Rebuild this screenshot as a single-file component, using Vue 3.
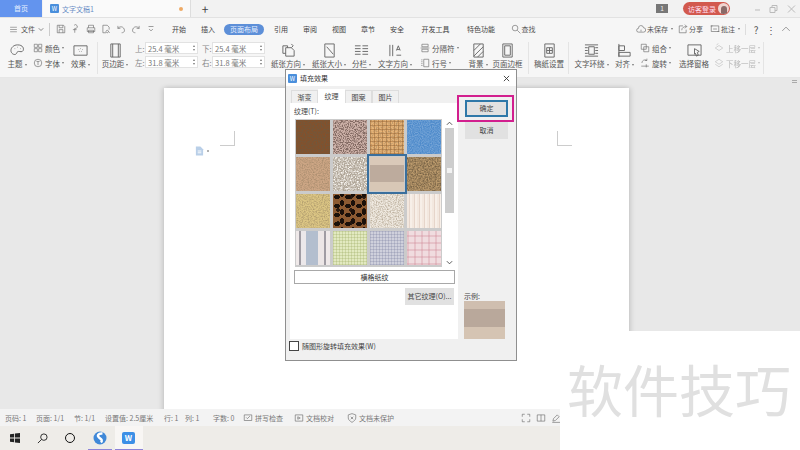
<template>
  <div class="screen">
    <div class="tabbar">
      <div class="home-tab">首页</div>
      <div class="doc-tab">
        <span class="w-logo">W</span>
        <span class="doc-name">文字文稿1</span>
        <span class="dot"></span>
      </div>
      <span class="plus">+</span>
      <span class="badge">1</span>
      <div class="login"><span>访客登录</span><span class="login-face"><i></i></span></div>
      <svg class="win-btns" viewBox="0 0 46 10">
        <path d="M3 6h5" />
        <path d="M18 3.500h5v5h-5zM20 3.500V1.500h5v5h-2" />
        <path d="M36 1.500l7 7M43 1.500l-7 7" />
      </svg>
    </div>

    <div class="menubar">
      <div class="file-menu">
        <svg class="ic12" viewBox="0 0 16 16"><path d="M2 4h12M2 8h12M2 12h12" /></svg>
        <span>文件</span>
        <svg class="ic-chev" viewBox="0 0 8 8"><path d="M1 3l3 3 3-3" /></svg>
      </div>
      <div class="quick">
        <svg v-for="(q, i) in quickIcons" :key="i" class="ic10" viewBox="0 0 16 16"><path :d="q" /></svg>
      </div>
      <div class="menu-tabs">
        <span v-for="m in menus" :key="m" class="menu-tab" :class="{ on: m === '页面布局' }">{{ m }}</span>
        <span class="find">
          <svg class="ic10" viewBox="0 0 16 16"><path d="M10 10l5 5M11 6.500a4.500 4.500 0 1 1-9 0a4.500 4.500 0 1 1 9 0" /></svg>查找
        </span>
      </div>
      <div class="menu-right">
        <span class="mr-item"><svg class="ic10" viewBox="0 0 16 16"><path d="M4 13a3 3 0 0 1 0-6a4 4 0 0 1 8-1a3.500 3.500 0 0 1 0 7zM8 9v3" /></svg>未保存<i class="caret"></i></span>
        <span class="mr-item"><svg class="ic10" viewBox="0 0 16 16"><path d="M8 3H2v11h11V9M6 10c0-4 3-6 8-6M11 1l3 3-3 3" /></svg>分享</span>
        <span class="mr-item mr-note"><svg class="ic10" viewBox="0 0 16 16"><path d="M2 3h12v9H2zM1 3h3M12 12h3M5 8h6" /></svg>批注<i class="caret"></i></span>
        <span class="mr-sep"></span>
        <span class="mr-help">?</span>
        <span class="mr-help">⋮</span>
        <svg class="ic10" viewBox="0 0 16 16"><path d="M2 11l6-6 6 6" /></svg>
      </div>
    </div>

    <div class="ribbon">
      <template v-for="(it, i) in ribbon" :key="i">
        <div v-if="it.type === 'sep'" class="rb-sep" :style="{ width: it.w + 'px' }"><i v-if="it.line"></i></div>
        <div v-else-if="it.type === 'big'" class="rb-big" :style="{ width: it.w + 'px' }">
          <svg class="ic-big" viewBox="0 0 16 16"><path :d="it.icon" /></svg>
          <span class="rb-label">{{ it.label }}<i v-if="it.caret" class="caret"></i></span>
        </div>
        <div v-else-if="it.type === 'stack'" class="rb-stack" :class="{ faded: it.faded }" :style="{ width: it.w + 'px' }">
          <div v-for="r in it.rows" :key="r.label" class="rb-row">
            <svg class="ic11" viewBox="0 0 16 16"><path :d="r.icon" /></svg>
            <span>{{ r.label }}</span><i class="caret"></i>
          </div>
        </div>
        <div v-else class="rb-fields" :style="{ width: it.w + 'px' }">
          <div v-for="f in fields" :key="f.label" class="field">
            <span class="field-label">{{ f.label }}</span>
            <span class="field-box">{{ f.value }}<span class="spin"><i class="up"></i><i class="down"></i></span></span>
          </div>
        </div>
      </template>
    </div>

    <div class="doc-area">
      <div class="ruler-toggle"></div>
      <div class="page">
        <div class="marks">
          <span class="mark-l"></span>
          <span class="mark-r"></span>
        </div>
        <div class="note">
          <svg class="note-icon" viewBox="0 0 10 10"><path d="M1 0h5l3 3v7H1z" /><path class="note-line" d="M3 5h4M3 7h4" /></svg>
          <i class="note-dot"></i>
        </div>
      </div>
    </div>

    <div class="statusbar">
      <span v-for="s in statusItems" :key="s.text" class="st-item" :style="{ width: s.w + 'px' }">
        <svg v-if="s.icon" class="ic10" viewBox="0 0 16 16"><path :d="s.icon" /></svg>{{ s.text }}
      </span>
      <div class="st-right">
        <svg class="ic10" viewBox="0 0 16 16"><path d="M2 6V2h4M14 6V2h-4M2 10v4h4M14 10v4h-4" /></svg>
        <svg class="ic10" viewBox="0 0 16 16"><path d="M2 3h12v10H2zM8 3v10" /></svg>
        <svg class="ic10" viewBox="0 0 16 16"><path d="M3 13l1-4 6-6 3 3-6 6zM2 15h13" /></svg>
      </div>
    </div>

    <div class="taskbar">
      <span class="tb-cell">
        <svg class="win" viewBox="0 0 12 12"><path d="M0 1.500l5-.7v4.700H0zM6 .7l6-.7v5.500H6zM0 6.500h5v4.700l-5-.7zM6 6.500h6V12l-6-.7z" /></svg>
      </span>
      <span class="tb-cell">
        <svg class="tb-search" viewBox="0 0 12 12"><path d="M5 7l-4 4M11 4.500a3.500 3.500 0 1 1-7 0a3.500 3.500 0 1 1 7 0" /></svg>
      </span>
      <span class="tb-cell"><i class="tb-circle"></i></span>
      <span class="tb-cell tb-app tb-sogou">
        <svg class="sogou" viewBox="0 0 14 14">
          <circle cx="7" cy="7" r="6.500" />
          <path d="M9.500 2.500C5 2 4 5 6 6.500S10 9 8 11.500" />
        </svg>
      </span>
      <span class="tb-cell tb-app tb-active"><span class="wps-tile">W</span></span>
    </div>

    <div class="dialog">
      <div class="dlg-title">
        <span class="w-logo">W</span>
        <span class="dlg-name">填充效果</span>
        <svg class="dlg-close" viewBox="0 0 8 8"><path d="M1 1l6 6M7 1L1 7" /></svg>
      </div>
      <div class="dlg-main">
        <div class="dlg-left">
          <div class="dlg-tabs">
            <span v-for="t in dlgTabs" :key="t" class="dlg-tab" :class="{ on: t === '纹理' }">{{ t }}</span>
          </div>
          <div class="panel">
            <div class="panel-label">纹理(T):</div>
            <div class="tex-list">
              <div class="tex-grid">
                <div v-for="(t, i) in textures" :key="i" class="tex" :class="[t.cls, { picked: i === 6 }]">
                  <svg v-if="t.noise" class="tex-noise" viewBox="0 0 34 34"><rect width="34" height="34" :filter="'url(#' + t.noise + ')'" /></svg>
                </div>
              </div>
              <div class="tex-scroll">
                <svg class="sc-arrow" viewBox="0 0 8 6"><path d="M1 4.500l3-3 3 3" /></svg>
                <div class="sc-thumb"><i></i></div>
                <svg class="sc-arrow sc-down" viewBox="0 0 8 6"><path d="M1 1.500l3 3 3-3" /></svg>
              </div>
            </div>
            <div class="tex-name">横格纸纹</div>
            <div class="other-btn">其它纹理(O)...</div>
          </div>
        </div>
        <div class="dlg-right">
          <div class="ok-wrap">
            <div class="btn ok">确定</div>
            <span class="pink-box"></span>
          </div>
          <div class="btn cancel">取消</div>
          <div class="sample-label">示例:</div>
          <div class="sample"></div>
        </div>
      </div>
      <div class="dlg-check"><i class="check-box"></i>随图形旋转填充效果(W)</div>
    </div>

    <div class="cover"><span>软件技巧</span></div>

    <svg class="defs" width="0" height="0">
      <filter id="nDark" x="0" y="0" width="100%" height="100%">
        <feTurbulence type="fractalNoise" baseFrequency="0.75" numOctaves="2" seed="3" />
        <feColorMatrix values="0 0 0 0 0.15  0 0 0 0 0.1  0 0 0 0 0.05  1.8 0 0 0 -0.55" />
      </filter>
      <filter id="nHard" x="0" y="0" width="100%" height="100%">
        <feTurbulence type="fractalNoise" baseFrequency="0.85" numOctaves="2" seed="21" />
        <feColorMatrix values="0 0 0 0 0.22  0 0 0 0 0.14  0 0 0 0 0.12  4.5 0 0 0 -1.9" />
      </filter>
      <filter id="nSoft" x="0" y="0" width="100%" height="100%">
        <feTurbulence type="fractalNoise" baseFrequency="0.8" numOctaves="2" seed="8" />
        <feColorMatrix values="0 0 0 0 0.25  0 0 0 0 0.18  0 0 0 0 0.1  1.2 0 0 0 -0.45" />
      </filter>
      <filter id="nLight" x="0" y="0" width="100%" height="100%">
        <feTurbulence type="fractalNoise" baseFrequency="0.7" numOctaves="2" seed="12" />
        <feColorMatrix values="0 0 0 0 1  0 0 0 0 0.98  0 0 0 0 0.95  2.4 0 0 0 -0.9" />
      </filter>
      <filter id="nBlue" x="0" y="0" width="100%" height="100%">
        <feTurbulence type="fractalNoise" baseFrequency="0.9" numOctaves="1" seed="5" />
        <feColorMatrix values="0 0 0 0 0.9  0 0 0 0 0.95  0 0 0 0 1  0.6 0 0 0 -0.2" />
      </filter>
    </svg>
  </div>
</template>

<script setup>
const quickIcons = [
  'M2 2h10l2 2v10H2zM5 2v4h6V2M5 14v-5h6v5',
  'M5 2a3 3 0 1 1 3 5H6v7M3 9h6',
  'M4 6V2h8v4M2 6h12v6H2zM4 10h8v4H4z',
  'M3 2h7l3 3v4M3 2v12h5M10 10a2 2 0 1 0 .1 0M12 12l2 2',
  'M3 3v4h4M3 7c2-3 8-4 10 1s-2 6-4 6',
  'M13 3v4H9M13 7c-2-3-8-4-10 1s2 6 4 6',
  'M4 4h8M5 8l3 3 3-3'
]

const menus = ['开始', '插入', '页面布局', '引用', '审阅', '视图', '章节', '安全', '开发工具', '特色功能']

const fields = [
  { label: '上:', value: '25.4 毫米' },
  { label: '下:', value: '25.4 毫米' },
  { label: '左:', value: '31.8 毫米' },
  { label: '右:', value: '31.8 毫米' }
]

const ribbon = [
  { type: 'sep', w: 4 },
  { type: 'big', w: 26, label: '主题', caret: true, icon: 'M8 2C4 2 1 5 1 8s3 5 5 4 1-3 3-3 4 1 5-1 0-6-6-6zM5 6h.5M8 4.500h.5M11 6h.5' },
  { type: 'stack', w: 39, rows: [
    { label: '颜色', icon: 'M2 2h5v5H2zM9 2h5v5H9zM2 9h5v5H2zM9 9h5v5H9z' },
    { label: '字体', icon: 'M14 8A6 6 0 1 1 2 8a6 6 0 1 1 12 0M5.500 5.500h5M8 5.500v6' }
  ] },
  { type: 'big', w: 23, label: '效果', caret: true, icon: 'M1 3h14v10H1zM6 7h.5M8 6h.5M10 7h.5M7 9h.5M9 9h.5' },
  { type: 'sep', w: 10, line: true },
  { type: 'big', w: 26, label: '页边距', caret: true, icon: 'M3 1h10v14H3zM5 1v14M11 1v14' },
  { type: 'fields', w: 140 },
  { type: 'big', w: 40, label: '纸张方向', caret: true, icon: 'M5 5h6l3 3v6H5zM2 3h5v2M2 3v8h3M11 1l2 2-2 2' },
  { type: 'big', w: 42, label: '纸张大小', caret: true, icon: 'M3 1h10v14H3zM5 4l7 8' },
  { type: 'big', w: 23, label: '分栏', caret: true, icon: 'M1 3h6M1 6h6M1 9h6M1 12h6M9 3h6M9 6h6M9 9h6M9 12h6' },
  { type: 'big', w: 44, label: '文字方向', caret: true, icon: 'M2 2v12M5 2v12M9 8l2-5 2 5M9.500 7h3M9 13h5' },
  { type: 'stack', w: 43, rows: [
    { label: '分隔符', icon: 'M3 2h10v4H3zM1 8h14M3 10h10v4H3z' },
    { label: '行号', icon: 'M6 2h8v12H6zM2 3h2M2 6h2M2 9h2M2 12h2' }
  ] },
  { type: 'sep', w: 6 },
  { type: 'big', w: 24, label: '背景', caret: true, icon: 'M3 1h10v14H3zM3 8l7-7M3 14L13 4M7 15l6-6' },
  { type: 'big', w: 35, label: '页面边框', icon: 'M3 1h10v14H3zM5 3h6v10H5z' },
  { type: 'sep', w: 7, line: true },
  { type: 'big', w: 34, label: '稿纸设置', icon: 'M3 1h10v14H3zM5 5h6v6H5zM5 8h6M8 5v6' },
  { type: 'sep', w: 5, line: true },
  { type: 'big', w: 41, label: '文字环绕', caret: true, icon: 'M1 2h14M1 14h14M1 5h3M1 8h3M1 11h3M12 5h3M12 8h3M12 11h3M5 4h6v8H5z' },
  { type: 'big', w: 25, label: '对齐', caret: true, icon: 'M2 1v14M2 3h6v5H2zM2 10h12v4H2z' },
  { type: 'stack', w: 40, rows: [
    { label: '组合', icon: 'M2 2h8v8H2zM6 6h8v8H6z' },
    { label: '旋转', icon: 'M3 8a5 5 0 0 1 8-4M11 1v3H8M2 13h12M10 10v5' }
  ] },
  { type: 'big', w: 34, label: '选择窗格', icon: 'M1 2h14v11H1zM8 6l5 3-2 1 1 3-2 1-1-3-1 1z' },
  { type: 'stack', w: 50, faded: true, rows: [
    { label: '上移一层', icon: 'M2 8l6-4 6 4-6 4zM4 3l3-2' },
    { label: '下移一层', icon: 'M2 6l6-4 6 4-6 4zM2 10l6 4 6-4' }
  ] },
  { type: 'sep', w: 5, line: true }
]

const statusItems = [
  { text: '页码: 1', w: 31 },
  { text: '页面: 1/1', w: 38 },
  { text: '节: 1/1', w: 31 },
  { text: '设置值: 2.5厘米', w: 59 },
  { text: '行: 1', w: 21 },
  { text: '列: 1', w: 28 },
  { text: '字数: 0', w: 30 },
  { text: '拼写检查', w: 51, icon: 'M2 3h12v9H2zM5 7l2 2 4-4' },
  { text: '文档校对', w: 53, icon: 'M2 3h12v10H2zM6 6l4 2-4 2z' },
  { text: '文档未保护', w: 50, icon: 'M8 1l6 2v5c0 3-3 5-6 7-3-2-6-4-6-7V3zM6 6l4 4M10 6l-4 4' }
]

const dlgTabs = ['渐变', '纹理', '图案', '图片']

const textures = [
  { cls: 't-brown', noise: 'nDark' },
  { cls: 't-granite', noise: 'nHard' },
  { cls: 't-burlap', noise: 'nSoft' },
  { cls: 't-blue', noise: 'nBlue' },
  { cls: 't-sand', noise: 'nSoft' },
  { cls: 't-stone', noise: 'nLight' },
  { cls: 't-bands' },
  { cls: 't-cork', noise: 'nDark' },
  { cls: 't-yellow', noise: 'nSoft' },
  { cls: 't-leopard' },
  { cls: 't-paper', noise: 'nSoft' },
  { cls: 't-wood' },
  { cls: 't-stripes' },
  { cls: 't-green' },
  { cls: 't-lilac' },
  { cls: 't-pink' }
]
</script>

<style>
html, body {
  margin: 0;
  background: #fff;
}
</style>

<style scoped>
.screen {
  position: relative;
  display: flex;
  flex-direction: column;
  width: 800px;
  height: 450px;
  overflow: hidden;
  font-family: "Noto Sans CJK SC", "Noto Sans", sans-serif;
  font-size: 7.5px;
  color: #555;
  background: #f3f3f3;
}
svg path {
  fill: none;
  stroke: #666;
  stroke-width: 1;
}
i {
  font-style: normal;
}
.ic10 { width: 10px; height: 10px; flex-shrink: 0; }
.ic11 { width: 10px; height: 10px; flex-shrink: 0; margin-right: 2px; }
.ic12 { width: 9px; height: 9px; }
.ic-big { width: 15px; height: 15px; flex-shrink: 0; }
.ic-chev { width: 6px; height: 6px; }
.caret {
  display: inline-block;
  width: 0;
  height: 0;
  margin-left: 2px;
  vertical-align: middle;
  border-top: 2px solid #777;
  border-left: 1.5px solid transparent;
  border-right: 1.5px solid transparent;
}

/* top tabs */
.tabbar {
  display: flex;
  align-items: stretch;
  height: 18px;
  font-size: 7px;
  background: #f2f2f2;
  border-bottom: 1px solid #e2e2e2;
  box-sizing: border-box;
}
.home-tab {
  width: 42px;
  line-height: 17px;
  text-align: center;
  color: #e8f0ff;
  background: #6394ee;
}
.doc-tab {
  display: flex;
  align-items: center;
  width: 148px;
  margin-left: 1px;
  padding-left: 7px;
  box-sizing: border-box;
  color: #6b8fc6;
  background: #fafafa;
  border-right: 1px solid #ddd;
}
.w-logo {
  width: 9px;
  height: 9px;
  line-height: 9px;
  font-size: 6px;
  text-align: center;
  color: #fff;
  background: #4a8fdc;
  border-radius: 1px;
}
.doc-name {
  margin-left: 3px;
}
.dot {
  width: 4px;
  height: 4px;
  margin-left: auto;
  margin-right: 7px;
  border-radius: 50%;
  background: #eeaa66;
}
.plus {
  width: 28px;
  line-height: 17px;
  text-align: center;
  font-size: 12px;
  color: #444;
}
.badge {
  align-self: center;
  width: 12px;
  height: 9px;
  margin-left: 437px;
  line-height: 9px;
  text-align: center;
  font-size: 6.5px;
  color: #eee;
  background: #777;
}
.login {
  display: flex;
  align-items: center;
  justify-content: space-between;
  align-self: center;
  width: 47px;
  height: 13px;
  margin-left: 15px;
  padding: 0 1px 0 5px;
  box-sizing: border-box;
  border-radius: 7px;
  color: #fde;
  background: #d2594e;
}
.login-face {
  display: flex;
  align-items: flex-end;
  justify-content: center;
  width: 11px;
  height: 11px;
  overflow: hidden;
  border-radius: 50%;
  background: #f0d4d0;
}
.login-face i {
  width: 6px;
  height: 8px;
  border-radius: 3px 3px 0 0;
  background: #8a6a68;
}
.win-btns {
  align-self: center;
  width: 46px;
  height: 10px;
  margin-left: 22px;
}
.win-btns path {
  stroke: #bbb;
}

/* menu row */
.menubar {
  display: flex;
  align-items: center;
  height: 22px;
  font-size: 7px;
  background: #f6f6f6;
}
.file-menu {
  display: flex;
  align-items: center;
  gap: 3px;
  width: 50px;
  height: 13px;
  padding-left: 9px;
  box-sizing: border-box;
  border-right: 1px solid #ccc;
}
.quick {
  display: flex;
  gap: 5px;
  width: 114.5px;
  padding-left: 6px;
  box-sizing: border-box;
}
.menu-tabs {
  display: flex;
  align-items: center;
  flex: 1;
}
.menu-tab {
  width: 29px;
  text-align: center;
  color: #444;
}
.menu-tab.on {
  width: 40px;
  margin: 0 2.5px 0 1.5px;
  line-height: 11px;
  border-radius: 6px;
  color: #e8f0ff;
  background: #5d8fd8;
}
.menu-tab:nth-child(9) {
  width: 48px;
}
.menu-tab:nth-child(10) {
  width: 43px;
}
.find {
  display: flex;
  align-items: center;
  gap: 1px;
  margin-left: 8px;
}
.menu-right {
  display: flex;
  align-items: center;
  gap: 5px;
  padding-right: 9px;
}
.mr-item {
  display: flex;
  align-items: center;
  gap: 1px;
  white-space: nowrap;
}
.mr-note {
  margin-left: 2px;
}
.mr-sep {
  width: 1px;
  height: 11px;
  background: #ddd;
}
.mr-help {
  width: 10px;
  text-align: center;
  font-size: 10px;
}

/* ribbon */
.ribbon {
  display: flex;
  height: 38px;
  background: #f6f6f6;
  border-bottom: 1px solid #e6e6e6;
  box-sizing: border-box;
}
.rb-sep {
  display: flex;
  justify-content: center;
  padding: 2px 0 3px;
  box-sizing: border-box;
}
.rb-sep i {
  width: 1px;
  background: #e4e4e4;
}
.rb-big {
  display: flex;
  flex-direction: column;
  align-items: center;
  padding-top: 3px;
  box-sizing: border-box;
  white-space: nowrap;
}
.rb-label {
  line-height: 12px;
}
.rb-stack {
  display: flex;
  flex-direction: column;
  gap: 3px;
  padding: 2px 0 0 3px;
  box-sizing: border-box;
}
.rb-row {
  display: flex;
  align-items: center;
  height: 12px;
  white-space: nowrap;
}
.faded {
  opacity: 0.4;
}
.rb-fields {
  display: grid;
  grid-template-columns: 65px 65px;
  gap: 2px 2px;
  align-content: start;
  padding: 2px 0 0 7px;
  box-sizing: border-box;
}
.field {
  display: flex;
  align-items: center;
}
.field-label {
  width: 10px;
  color: #888;
}
.field-box {
  display: flex;
  align-items: center;
  justify-content: space-between;
  width: 53px;
  height: 12px;
  padding: 0 2px;
  box-sizing: border-box;
  color: #777;
  background: #fff;
  border: 1px solid #e2e2e2;
}
.spin {
  display: flex;
  flex-direction: column;
  gap: 2px;
}
.spin i {
  width: 0;
  height: 0;
  border-left: 1.5px solid transparent;
  border-right: 1.5px solid transparent;
}
.spin .up {
  border-bottom: 2px solid #777;
}
.spin .down {
  border-top: 2px solid #777;
}

/* document */
.doc-area {
  position: relative;
  display: flex;
  height: 331px;
  padding: 10px 0 0 164px;
  box-sizing: border-box;
  overflow: hidden;
  background: #e8e8e8;
}
.ruler-toggle {
  position: absolute;
  top: 2px;
  right: 3px;
  width: 5px;
  height: 1px;
  background: #aaa;
  box-shadow: 0 2px 0 #aaa;
}
.page {
  width: 465px;
  height: 400px;
  padding-top: 43px;
  box-sizing: border-box;
  background: #fff;
  box-shadow: -2px 0 5px rgba(0, 0, 0, 0.12), 2px 0 5px rgba(0, 0, 0, 0.12);
}
.marks {
  display: flex;
  justify-content: space-between;
  padding: 0 57px 0 56px;
}
.mark-l, .mark-r {
  width: 14px;
  height: 14px;
  border-bottom: 1px solid #ccc;
}
.mark-l { border-right: 1px solid #ccc; }
.mark-r { border-left: 1px solid #ccc; }
.note {
  display: flex;
  align-items: center;
  gap: 3px;
  padding-left: 31px;
}
.note-icon {
  width: 9px;
  height: 10px;
}
.note-icon path {
  fill: #b9cfe8;
  stroke: none;
}
.note-icon .note-line {
  fill: none;
  stroke: #fff;
}
.note-dot {
  width: 2px;
  height: 2px;
  background: #999;
  border-radius: 50%;
}

/* status bar */
.statusbar {
  display: flex;
  align-items: center;
  height: 17px;
  padding-left: 5px;
  box-sizing: border-box;
  font-size: 7px;
  color: #777;
  background: #f3f3f3;
}
.st-item {
  display: flex;
  align-items: center;
  gap: 2px;
  flex-shrink: 0;
  white-space: nowrap;
}
.st-right {
  display: flex;
  gap: 5px;
  margin-left: auto;
  margin-right: 239px;
}

/* taskbar */
.taskbar {
  display: flex;
  height: 24px;
  padding-left: 1px;
  background: #eeece8;
}
.tb-cell {
  display: flex;
  align-items: center;
  justify-content: center;
  width: 27.5px;
  height: 24px;
  box-sizing: border-box;
}
.tb-app {
  margin-left: 3px;
  border-bottom: 1px solid #8c83d8;
}
.tb-sogou {
  width: 24px;
  margin-left: 4px;
}
.tb-active {
  width: 28px;
  background: #f8f6f4;
}
.win {
  width: 10px;
  height: 10px;
}
.win path {
  fill: #222;
  stroke: none;
}
.tb-search {
  width: 11px;
  height: 11px;
}
.tb-search path {
  stroke: #222;
}
.tb-circle {
  width: 8px;
  height: 8px;
  border: 1.5px solid #111;
  border-radius: 50%;
}
.sogou {
  width: 14px;
  height: 14px;
}
.sogou circle {
  fill: #3f88d8;
}
.sogou path {
  stroke: #fff;
  stroke-width: 2.4;
}
.wps-tile {
  width: 13px;
  height: 12px;
  line-height: 12px;
  text-align: center;
  font-size: 8px;
  font-weight: 700;
  color: #fff;
  background: #3c8fe6;
  border-radius: 2px;
}

/* dialog */
.dialog {
  position: absolute;
  left: 285px;
  top: 69px;
  display: flex;
  flex-direction: column;
  width: 232px;
  height: 292px;
  box-sizing: border-box;
  font-size: 7px;
  color: #444;
  background: #f0f0f0;
  border: 1px solid #8f8f8f;
}
.dlg-title {
  display: flex;
  align-items: center;
  height: 16px;
  padding: 0 6px 0 2px;
  flex-shrink: 0;
  background: #fff;
}
.dlg-name {
  margin-left: 3px;
  color: #333;
}
.dlg-close {
  width: 7px;
  height: 7px;
  margin-left: auto;
}
.dlg-close path {
  stroke: #333;
}
.dlg-main {
  display: flex;
  padding: 3px 0 0 4px;
}
.dlg-left {
  width: 168px;
}
.dlg-tabs {
  display: flex;
  height: 14px;
  padding-left: 1px;
}
.dlg-tab {
  width: 27px;
  margin-top: 1px;
  line-height: 13px;
  text-align: center;
  background: #f0f0f0;
  border: 1px solid #ddd;
  border-bottom: none;
  box-sizing: border-box;
}
.dlg-tab.on {
  margin-top: 0;
  background: #fff;
  border-color: #fff;
}
.panel {
  display: flex;
  flex-direction: column;
  height: 236px;
  padding: 2px 4px 0;
  box-sizing: border-box;
  background: #fff;
}
.panel-label {
  height: 14px;
  line-height: 12px;
}
.tex-list {
  display: flex;
  width: 161px;
  height: 148px;
  padding: 1px 1px 1px 2px;
  box-sizing: border-box;
  background: #fff;
}
.tex-grid {
  display: grid;
  grid-template-columns: repeat(4, 34px);
  grid-auto-rows: 34px;
  gap: 3px;
  outline: 2px solid #cbcbcb;
  outline-offset: -1px;
  background: #cbcbcb;
}
.tex {
  position: relative;
  overflow: hidden;
}
.tex-noise {
  position: absolute;
  inset: 0;
  width: 100%;
  height: 100%;
}
.picked {
  outline: 2px solid #3a6f9d;
  outline-offset: 1px;
  z-index: 1;
}
.t-brown { background: #85502a; }
.t-granite { background: #cdb1a8; }
.t-burlap {
  background:
    repeating-linear-gradient(90deg, rgba(140, 85, 35, 0.4) 0 1px, transparent 1px 4px),
    repeating-linear-gradient(0deg, rgba(140, 85, 35, 0.4) 0 1px, transparent 1px 4px),
    #e8b477;
}
.t-blue { background: #4f8bcb; }
.t-sand { background: #cda685; }
.t-stone { background: #b0a698; }
.t-bands {
  background: linear-gradient(#dac9b9 0 24%, #bdab9d 24% 74%, #d8c7b6 74%);
}
.t-cork { background: #bb9a6c; }
.t-yellow { background: #dcc684; }
.t-leopard {
  background:
    radial-gradient(ellipse 3px 2.4px at 4px 3px, #1a100a 0 90%, transparent 100%) 0 0 / 11px 9px,
    radial-gradient(ellipse 2.4px 3px at 3px 4px, #1a100a 0 90%, transparent 100%) 6px 5px / 11px 9px,
    radial-gradient(circle at 2px 2px, #2a1a10 0 1.6px, transparent 2px) 3px 1px / 13px 13px,
    #8c5a32;
}
.t-paper { background: #efe9e0; }
.t-wood {
  background: repeating-linear-gradient(90deg, #f3e8df 0 2px, #e6d5ca 2px 3px, #f7efe8 3px 5px);
}
.t-stripes {
  background: linear-gradient(90deg, #efe9e9 0 3px, #a09ca3 3px 5px, #ece8ea 5px 10px, #b3bece 10px 22px, #ece6e6 22px 28px, #a09ca3 28px 30px, #efe9e9 30px);
}
.t-green {
  background:
    repeating-linear-gradient(90deg, rgba(150, 165, 90, 0.28) 0 1px, transparent 1px 3px),
    repeating-linear-gradient(0deg, rgba(150, 165, 90, 0.28) 0 1px, transparent 1px 3px),
    #e2e9c0;
}
.t-lilac {
  background:
    repeating-linear-gradient(90deg, rgba(110, 115, 150, 0.25) 0 1px, transparent 1px 3px),
    repeating-linear-gradient(0deg, rgba(110, 115, 150, 0.25) 0 1px, transparent 1px 3px),
    #cfd0dc;
}
.t-pink {
  background:
    repeating-linear-gradient(90deg, rgba(205, 130, 145, 0.28) 0 2px, transparent 2px 7px),
    repeating-linear-gradient(0deg, rgba(205, 130, 145, 0.28) 0 2px, transparent 2px 7px),
    #f0dcdf;
}
.tex-scroll {
  display: flex;
  flex-direction: column;
  align-items: center;
  width: 10px;
  margin-left: 3px;
}
.sc-arrow {
  width: 7px;
  height: 7px;
  flex-shrink: 0;
}
.sc-arrow path {
  stroke: #444;
}
.sc-down {
  margin-top: auto;
}
.sc-thumb {
  display: flex;
  align-items: center;
  justify-content: center;
  width: 9px;
  height: 85px;
  margin-top: 1px;
  background: #cdcdcd;
}
.sc-thumb i {
  width: 5px;
  height: 5px;
  background: #f2f2f2;
}
.tex-name {
  width: 161px;
  height: 14px;
  margin-top: 3px;
  line-height: 12px;
  text-align: center;
  box-sizing: border-box;
  color: #333;
  border: 1px solid #a8a8a8;
}
.other-btn {
  align-self: flex-end;
  width: 49px;
  height: 17px;
  margin-top: 4px;
  line-height: 17px;
  text-align: center;
  white-space: nowrap;
  background: #e1e1e1;
}
.dlg-right {
  display: flex;
  flex-direction: column;
  width: 44px;
  height: 250px;
  margin-left: 6px;
  padding-top: 11px;
  box-sizing: border-box;
}
.ok-wrap {
  position: relative;
  margin-left: 1px;
}
.btn {
  height: 17px;
  line-height: 17px;
  text-align: center;
  box-sizing: border-box;
  background: #e1e1e1;
}
.ok {
  line-height: 13px;
  border: 2px solid #2f78a8;
}
.cancel {
  margin: 5px 0 0 1px;
}
.pink-box {
  position: absolute;
  left: -8px;
  top: -5px;
  width: 57px;
  height: 27px;
  box-sizing: border-box;
  border: 2px solid #d21f8e;
}
.sample-label {
  margin-top: 152px;
  line-height: 10px;
}
.sample {
  width: 41px;
  height: 38px;
  margin-top: 0;
  background: linear-gradient(#cfbeaf 0 21%, #b9a89b 21% 68%, #d5c4b3 68%);
}
.dlg-check {
  display: flex;
  align-items: center;
  gap: 3px;
  margin: 2px 0 0 3px;
}
.check-box {
  width: 8px;
  height: 8px;
  background: #fff;
  border: 1px solid #444;
}

/* white patch with the site mark */
.cover {
  position: absolute;
  left: 560px;
  top: 331px;
  width: 240px;
  height: 119px;
  background: #fff;
}
.cover span {
  position: absolute;
  left: 7px;
  top: 22px;
  font-size: 56px;
  line-height: 70px;
  white-space: nowrap;
  color: #e0e0e0;
}
.defs {
  position: absolute;
}
</style>
